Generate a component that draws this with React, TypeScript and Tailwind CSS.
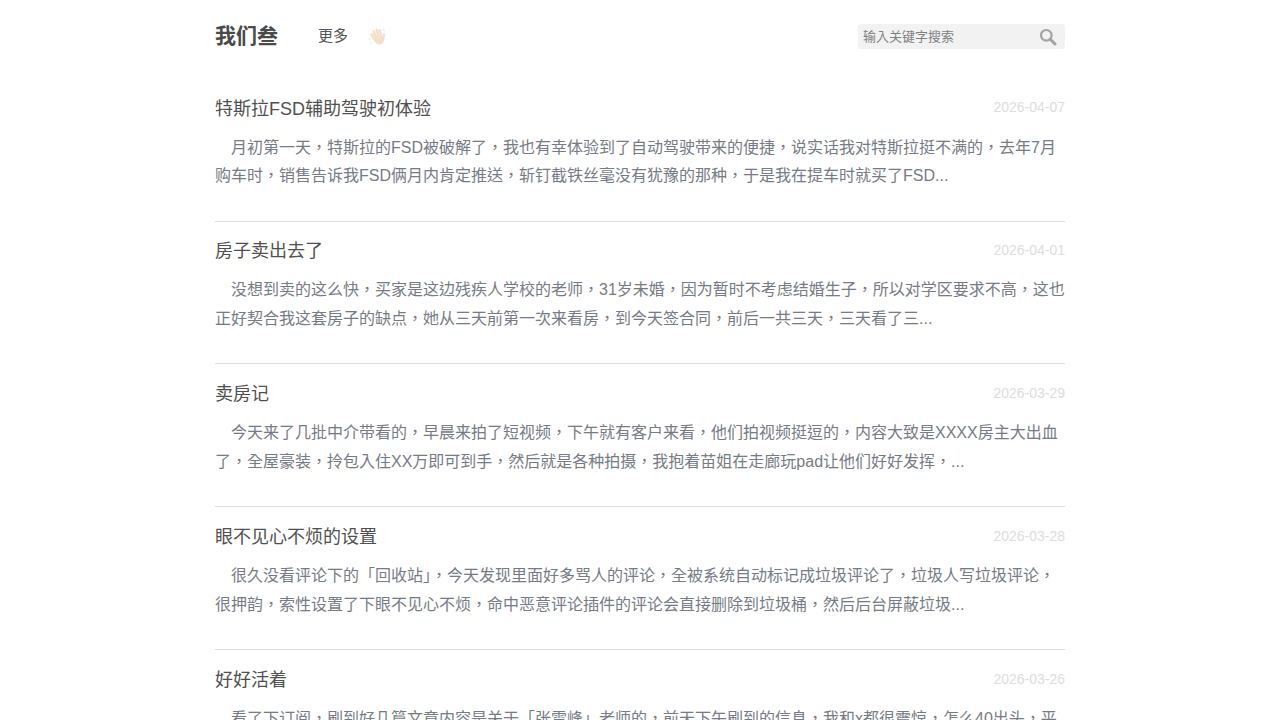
const POSTS = [
  {
    title: '特斯拉FSD辅助驾驶初体验',
    date: '2026-04-07',
    text: '月初第一天，特斯拉的FSD被破解了，我也有幸体验到了自动驾驶带来的便捷，说实话我对特斯拉挺不满的，去年7月购车时，销售告诉我FSD俩月内肯定推送，斩钉截铁丝毫没有犹豫的那种，于是我在提车时就买了FSD...',
  },
  {
    title: '房子卖出去了',
    date: '2026-04-01',
    text: '没想到卖的这么快，买家是这边残疾人学校的老师，31岁未婚，因为暂时不考虑结婚生子，所以对学区要求不高，这也正好契合我这套房子的缺点，她从三天前第一次来看房，到今天签合同，前后一共三天，三天看了三...',
  },
  {
    title: '卖房记',
    date: '2026-03-29',
    text: '今天来了几批中介带看的，早晨来拍了短视频，下午就有客户来看，他们拍视频挺逗的，内容大致是XXXX房主大出血了，全屋豪装，拎包入住XX万即可到手，然后就是各种拍摄，我抱着苗姐在走廊玩pad让他们好好发挥，...',
  },
  {
    title: '眼不见心不烦的设置',
    date: '2026-03-28',
    text: '很久没看评论下的「回收站」，今天发现里面好多骂人的评论，全被系统自动标记成垃圾评论了，垃圾人写垃圾评论，很押韵，索性设置了下眼不见心不烦，命中恶意评论插件的评论会直接删除到垃圾桶，然后后台屏蔽垃圾...',
  },
  {
    title: '好好活着',
    date: '2026-03-26',
    text: '看了下订阅，刷到好几篇文章内容是关于「张雪峰」老师的，前天下午刷到的信息，我和x都很震惊，怎么40出头，平时看着身体也挺好的人，说没就没了，真是世事无常，还是要好好活着，好好锻炼，好好吃饭，好好...',
  },
]

// 招手的小图标，原图是个很淡的 emoji
function WaveIcon() {
  return (
    <svg width="20" height="20" viewBox="0 0 20 20" className="block">
      <g stroke="#f5dfc8" strokeWidth="2.6" strokeLinecap="round" fill="none">
        <path d="M5.4 11.5 3.6 7.6" />
        <path d="M7.6 9.500 5.700 4.700" />
        <path d="M10.400 8.800 8.700 3.200" />
        <path d="M13.300 9 11.800 3.500" />
      </g>
      <path d="M5 11c1.500-2 7-3 9-1.500l1.200-3.300c.9-.5 1.800 0 1.800 1-.2 2.300-.4 4.300-1 6.300-.7 2.700-2.800 4-5 3.900-3-.2-4.800-2.400-6-6.400Z" fill="#f5dfc8" />
      <g stroke="#d5d5d5" strokeWidth="0.8" strokeLinecap="round" fill="none">
        <path d="M1.200 11.500l.8 1.600" />
        <path d="M2.700 15l1 1.200" />
        <path d="M15.500 2.300l1 1.600" />
      </g>
    </svg>
  )
}

function SearchIcon() {
  return (
    <svg width="18" height="18" viewBox="0 0 18 18" className="block">
      <circle cx="7.300" cy="7.300" r="5.300" fill="none" stroke="#a3a3a3" strokeWidth="2.200" />
      <path d="M11.300 11.300 16 16" stroke="#a3a3a3" strokeWidth="3" strokeLinecap="round" />
    </svg>
  )
}

export default function App() {
  return (
    <div className="h-[720px] overflow-hidden bg-white font-['Liberation_Sans','Noto_Sans_CJK_TC',sans-serif]">
      <div className="mx-auto w-[850px]">
        {/* 顶部导航 */}
        <header className="flex h-[92px] items-start justify-between pt-[24px]">
          <div className="flex h-[25px] items-center">
            <a className="mb-[2px] text-[21px] font-bold leading-[23px] text-[#4a4a4a]">我们叁</a>
            <a className="ml-10 text-[15px] text-[#555]">更多</a>
            <span className="ml-[19.5px]"><WaveIcon /></span>
          </div>
          <div className="flex h-[25px] w-[207px] items-center justify-between rounded-[3px] bg-[#f2f2f2] pl-[5px] pr-[8px]">
            <span className="text-[13px] text-[#808080]">输入关键字搜索</span>
            <SearchIcon />
          </div>
        </header>

        {/* 文章列表 */}
        <main>
          {POSTS.map((p, i) => (
            <article key={p.date} className={i < POSTS.length - 1 ? 'border-b border-[#ddd] pb-[29.5px] mb-[13.25px]' : ''}>
              <div className="flex items-center justify-between pt-[1.5px]">
                <h2 className="text-[18px] font-normal leading-[30px] text-[#505050]">{p.title}</h2>
                <time className="pb-[1.5px] text-[14px] text-[#ddd]">{p.date}</time>
              </div>
              <p className="mt-[10px] indent-4 text-[16px] leading-[28.8px] text-[#767b85]">{p.text}</p>
            </article>
          ))}
        </main>
      </div>
    </div>
  )
}
